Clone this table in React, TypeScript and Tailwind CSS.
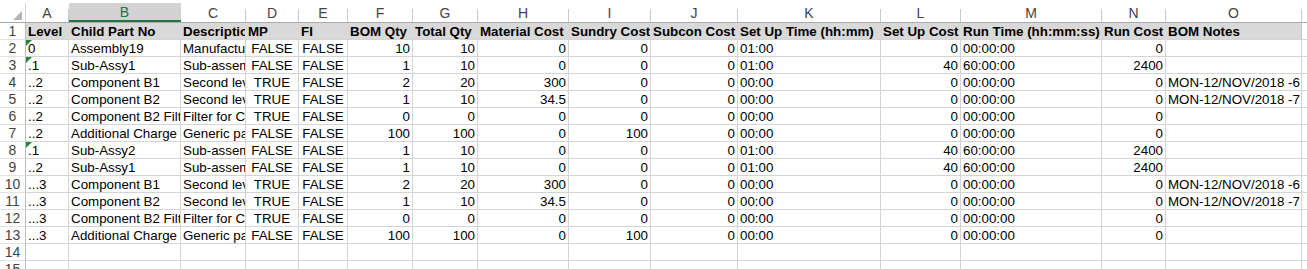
import React from 'react';

type Align = 'l' | 'r' | 'c';

const cols: { letter: string; w: string; align: Align }[] = [
  { letter: 'A', w: 'w-[43px]', align: 'l' },
  { letter: 'B', w: 'w-[112px]', align: 'l' },
  { letter: 'C', w: 'w-[65px]', align: 'l' },
  { letter: 'D', w: 'w-[53px]', align: 'c' },
  { letter: 'E', w: 'w-[49px]', align: 'c' },
  { letter: 'F', w: 'w-[65px]', align: 'r' },
  { letter: 'G', w: 'w-[65px]', align: 'r' },
  { letter: 'H', w: 'w-[91px]', align: 'r' },
  { letter: 'I', w: 'w-[82px]', align: 'r' },
  { letter: 'J', w: 'w-[87px]', align: 'r' },
  { letter: 'K', w: 'w-[143px]', align: 'l' },
  { letter: 'L', w: 'w-[80px]', align: 'r' },
  { letter: 'M', w: 'w-[141px]', align: 'l' },
  { letter: 'N', w: 'w-[64px]', align: 'r' },
  { letter: 'O', w: 'w-[136px]', align: 'l' },
];

const headings = [
  'Level', 'Child Part No', 'Description', 'MP', 'FI', 'BOM Qty', 'Total Qty', 'Material Cost',
  'Sundry Cost', 'Subcon Cost', 'Set Up Time (hh:mm)', 'Set Up Cost', 'Run Time (hh:mm:ss)', 'Run Cost', 'BOM Notes',
];

// [values..., flag for green "number stored as text" marker]
const rows: { cells: string[]; marker?: boolean }[] = [
  { cells: ['0', 'Assembly19', 'Manufactured Assembly', 'FALSE', 'FALSE', '10', '10', '0', '0', '0', '01:00', '0', '00:00:00', '0', ''], marker: true },
  { cells: ['.1', 'Sub-Assy1', 'Sub-assembly', 'FALSE', 'FALSE', '1', '10', '0', '0', '0', '01:00', '40', '60:00:00', '2400', ''], marker: true },
  { cells: ['..2', 'Component B1', 'Second level component', 'TRUE', 'FALSE', '2', '20', '300', '0', '0', '00:00', '0', '00:00:00', '0', 'MON-12/NOV/2018 -6'] },
  { cells: ['..2', 'Component B2', 'Second level component', 'TRUE', 'FALSE', '1', '10', '34.5', '0', '0', '00:00', '0', '00:00:00', '0', 'MON-12/NOV/2018 -7'] },
  { cells: ['..2', 'Component B2 Filter', 'Filter for Component B2', 'TRUE', 'FALSE', '0', '0', '0', '0', '0', '00:00', '0', '00:00:00', '0', ''] },
  { cells: ['..2', 'Additional Charge', 'Generic part', 'FALSE', 'FALSE', '100', '100', '0', '100', '0', '00:00', '0', '00:00:00', '0', ''] },
  { cells: ['.1', 'Sub-Assy2', 'Sub-assembly', 'FALSE', 'FALSE', '1', '10', '0', '0', '0', '01:00', '40', '60:00:00', '2400', ''], marker: true },
  { cells: ['..2', 'Sub-Assy1', 'Sub-assembly', 'FALSE', 'FALSE', '1', '10', '0', '0', '0', '01:00', '40', '60:00:00', '2400', ''] },
  { cells: ['...3', 'Component B1', 'Second level component', 'TRUE', 'FALSE', '2', '20', '300', '0', '0', '00:00', '0', '00:00:00', '0', 'MON-12/NOV/2018 -6'] },
  { cells: ['...3', 'Component B2', 'Second level component', 'TRUE', 'FALSE', '1', '10', '34.5', '0', '0', '00:00', '0', '00:00:00', '0', 'MON-12/NOV/2018 -7'] },
  { cells: ['...3', 'Component B2 Filter', 'Filter for Component B2', 'TRUE', 'FALSE', '0', '0', '0', '0', '0', '00:00', '0', '00:00:00', '0', ''] },
  { cells: ['...3', 'Additional Charge', 'Generic part', 'FALSE', 'FALSE', '100', '100', '0', '100', '0', '00:00', '0', '00:00:00', '0', ''] },
];

const alignClass: Record<Align, string> = {
  l: 'justify-start pl-[2px]',
  r: 'justify-end pr-[2px]',
  c: 'justify-center',
};

const RowNum: React.FC<{ n: number }> = ({ n }) => (
  <div className="w-[26px] shrink-0 flex items-center justify-center border-r border-r-[#bdbdbd] border-b border-b-[#e1e1e1] bg-white text-[14px] text-[#444]">
    {n}
  </div>
);

const Marker = () => (
  <svg className="absolute left-0 top-0" width="6" height="6" viewBox="0 0 6 6">
    <polygon points="0,0 6,0 0,6" fill="#1e8a38" />
  </svg>
);

const Cell: React.FC<{ w: string; align: Align; text: string; marker?: boolean; last?: boolean }> = ({ w, align, text, marker, last }) => (
  <div
    className={`relative ${w} shrink-0 flex items-center border-r border-b border-[#d4d4d4] whitespace-nowrap ${last ? 'overflow-visible' : 'overflow-hidden'} ${alignClass[align]}`}
  >
    {marker && <Marker />}
    <span className="pt-[1px]">{text}</span>
  </div>
);

export default function App() {
  return (
    <div className="w-[1307px] h-[269px] overflow-hidden bg-white text-black text-[13.33px] leading-none font-['Liberation_Sans',Arial,sans-serif]">
      {/* column letters */}
      <div className="flex h-[23px] pt-[3px] border-b border-[#ababab]">
        <div className="w-[26px] shrink-0 flex items-end justify-end pr-[3px] pb-[2px] border-r border-r-[#d4d4d4]">
          <svg width="9" height="9" viewBox="0 0 9 9">
            <polygon points="9,0 9,9 0,9" fill="#b4b4b4" />
          </svg>
        </div>
        {cols.map((c) => {
          const sel = c.letter === 'B';
          return (
            <div
              key={c.letter}
              className={`${c.w} shrink-0 flex items-end ${sel ? 'bg-[#d2d2d2] border-b-2 border-[#217346]' : ''}`}
            >
              <div className={`flex-1 self-stretch flex items-center justify-center text-[14px] ${sel ? 'text-[#217346]' : 'text-[#444]'}`}>
                {c.letter}
              </div>
              <div className={`w-px h-[13px] shrink-0 ${sel ? 'bg-[#d2d2d2]' : 'bg-[#c8c8c8]'}`} />
            </div>
          );
        })}
        <div className="flex-1" />
      </div>

      {/* heading row */}
      <div className="flex h-[17px]">
        <RowNum n={1} />
        {cols.map((c, i) => (
          <div
            key={c.letter}
            className={`${c.w} shrink-0 flex items-center pl-[2px] bg-[#d9d9d9] border-b border-r border-[#d4d4d4] font-bold whitespace-nowrap overflow-hidden ${i === 14 ? 'border-r-[#c8c8c8]' : 'border-r-transparent'}`}
          >
            <span className="pt-[1px]">{headings[i]}</span>
          </div>
        ))}
        <div className="flex-1 border-b border-[#d4d4d4]" />
      </div>

      {rows.map((r, ri) => (
        <div key={ri} className="flex h-[17px]">
          <RowNum n={ri + 2} />
          {cols.map((c, i) => (
            <Cell
              key={c.letter}
              w={c.w}
              align={c.align}
              text={r.cells[i]}
              marker={i === 0 && r.marker}
              last={i === 14}
            />
          ))}
          <div className="flex-1 border-b border-[#d4d4d4]" />
        </div>
      ))}

      {[14, 15].map((n) => (
        <div key={n} className="flex h-[17px]">
          <RowNum n={n} />
          {cols.map((c) => (
            <Cell key={c.letter} w={c.w} align="l" text="" />
          ))}
          <div className="flex-1 border-b border-[#d4d4d4]" />
        </div>
      ))}
    </div>
  );
}
